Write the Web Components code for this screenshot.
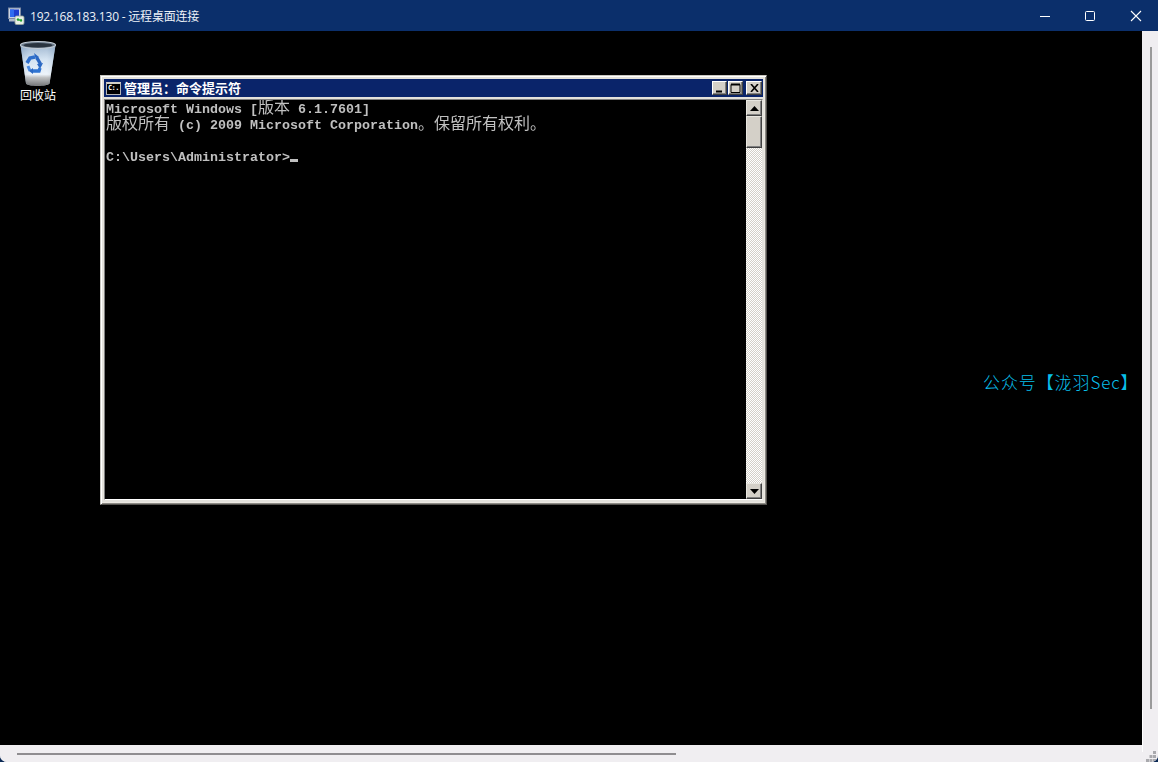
<!DOCTYPE html>
<html lang="zh"><head><meta charset="utf-8"><title>远程桌面连接</title>
<style>
html,body{margin:0;padding:0;height:100%;background:#0c2a55;overflow:hidden}
</style></head>
<body>
<rdp-app>
  <rdp-titlebar slot="top">192.168.183.130 - 远程桌面连接</rdp-titlebar>
  <desktop-icon label="回收站"></desktop-icon>
  <console-window title-text="管理员：命令提示符">
    <div>Microsoft Windows [<cjk-text>版本</cjk-text> 6.1.7601]</div>
    <div><cjk-text>版权所有</cjk-text> (c) 2009 Microsoft Corporation<cjk-text>。保留所有权利。</cjk-text></div>
    <div>&nbsp;</div>
    <div>C:\Users\Administrator&gt;<console-cursor></console-cursor></div>
  </console-window>
  <water-mark>公众号【泷羽Sec】</water-mark>
</rdp-app>
<script>
function def(name, html, extra){
  customElements.define(name, class extends HTMLElement{
    constructor(){super();this.attachShadow({mode:'open'}).innerHTML=html;}
    connectedCallback(){ if(extra) extra(this); }
  });
}
def('rdp-app',`<style>
:host{display:flex;flex-direction:column;width:1158px;height:762px;border-radius:0 0 7px 7px;overflow:hidden;background:#f0eef1;font-family:"Liberation Sans",sans-serif}
.main{flex:1;display:flex;min-height:0}
.desk{position:relative;flex:1;background:#000;overflow:hidden}
.v{width:16px;background:#f0eef1;display:flex;justify-content:center;padding:16px 0 36px;box-sizing:border-box;position:relative;flex:none}
.v i{display:block;width:2px;height:100%;background:#9a9a9a;margin-left:2px}
.v::before{content:"";position:absolute;left:0;bottom:0;height:35px;width:1px;background:#fff}
.h{height:17px;box-sizing:border-box;flex:none;background:#f0eef1;display:flex;align-items:flex-start;padding:8px 0 0 17px;position:relative}
.h i{display:block;width:659px;height:2px;background:#8f8d90}
.h::before{content:"";position:absolute;left:1142px;top:0;height:7px;width:1px;background:#fff}
.grip{position:absolute;right:0;bottom:0;width:12px;height:11px}
</style>
<slot name="top"></slot>
<div class="main"><div class="desk"><slot></slot></div><div class="v"><i></i></div></div>
<div class="h"><i></i><svg class="grip" viewBox="0 0 12 11"><g fill="#a9a9ad"><rect x="7" y="0" width="3" height="3"/><rect x="3.500" y="4" width="3" height="3"/><rect x="7" y="4" width="3" height="3"/><rect x="0" y="8" width="3" height="3"/><rect x="3.500" y="8" width="3" height="3"/><rect x="7" y="8" width="3" height="3"/></g></svg></div>`);

def('rdp-titlebar',`<style>
:host{display:flex;align-items:center;height:31px;background:#0b2f6b;color:#e9eef6;font:12px "Open Sans","Noto Sans CJK SC",sans-serif;flex:none}
.ic{width:18px;height:18px;margin:0 5px 0 7px;flex:none}
.t{flex:1;white-space:nowrap;position:relative;top:0;color:#edf1f7;letter-spacing:-.2px}
.b{height:31px;display:flex;align-items:center;justify-content:center;flex:none}
svg.g{width:12px;height:12px;display:block}
</style>
<svg class="ic" viewBox="0 0 18 18">
 <rect x="1.500" y="1" width="12" height="10.500" fill="#c9d4e6" stroke="#7d8aa3"/>
 <rect x="3" y="2.500" width="9" height="7.500" fill="#1e3fd0"/>
 <rect x="3" y="2.500" width="4" height="7.500" fill="#2f6cf0"/>
 <rect x="2" y="12" width="10" height="2.500" fill="#aeb8c9"/>
 <rect x="8" y="9" width="9" height="8.500" rx="1.500" fill="#e8efe6" stroke="#9aa69a" stroke-width=".8"/>
 <path d="M10 13h5M10 13l1.500-1.500M15 13l-1.500 1.500" stroke="#22a22f" stroke-width="1.500" fill="none"/>
</svg>
<span class="t"><slot></slot></span>
<div class="b" style="width:42px"><svg class="g" viewBox="0 0 12 12"><path d="M1 6.500h10" stroke="#fff"/></svg></div>
<div class="b" style="width:48px"><svg class="g" viewBox="0 0 12 12"><rect x="1.500" y="1.500" width="9" height="9" rx="1" fill="none" stroke="#fff"/></svg></div>
<div class="b" style="width:44px"><svg class="g" viewBox="0 0 12 12"><path d="M1 1l10 10M11 1L1 11" stroke="#fff" stroke-width="1.100"/></svg></div>`);

def('desktop-icon',`<style>
:host{position:absolute;left:8px;top:8px;width:60px;display:flex;flex-direction:column;align-items:center;color:#fff;font:12px "Noto Sans CJK SC",sans-serif}
svg{width:40px;height:50px;display:block}
span{line-height:16px;margin-top:-2px;text-shadow:1px 1px 1px #000}
</style>
<svg viewBox="0 0 40 50">
 <defs>
  <linearGradient id="a" x1="0" x2="1" y1="0" y2="0"><stop offset="0" stop-color="#6f88a6"/><stop offset=".25" stop-color="#dfeaf5"/><stop offset=".75" stop-color="#eef4fa"/><stop offset="1" stop-color="#8aa2bb"/></linearGradient>
  <linearGradient id="b" x1="0" x2="0" y1="0" y2="1"><stop offset="0" stop-color="#8ea9c6"/><stop offset=".35" stop-color="#cfe0f0"/><stop offset=".72" stop-color="#eef4fa"/><stop offset=".8" stop-color="#b4b4b4"/><stop offset="1" stop-color="#5a5a5a"/></linearGradient>
 </defs>
 <path d="M2.500 6L8 44.500C9 47.500 30 47.500 31.500 44.500L37.500 6Z" fill="url(#a)"/>
 <path d="M2.500 6L8 44.500C9 47.500 30 47.500 31.500 44.500L37.500 6Z" fill="url(#b)" opacity=".8"/>
 <ellipse cx="20" cy="6" rx="17.500" ry="3.500" fill="#6d7c8c" stroke="#c3ccd5" stroke-width="1.100"/>
 <ellipse cx="20" cy="6.300" rx="14.500" ry="2.200" fill="#2a343f"/>
 <g fill="none">
  <path d="M9 24l3-5 5-1" stroke="#2f6fcb" stroke-width="3.600"/>
  <path d="M19 19l3.500 6" stroke="#2b66c0" stroke-width="3.400"/>
  <path d="M22 29l-1 3h-6" stroke="#2f74d2" stroke-width="3.400"/>
  <path d="M10 27l2 5" stroke="#4a8ae0" stroke-width="3"/>
 </g>
 <path d="M16 14l2 7 3-3zM25 24l-6 1 3 5zM15 29l-4 3 4 3z" fill="#2a68c4"/>
</svg>
<span></span>`, el=>{el.shadowRoot.querySelector('span').textContent=el.getAttribute('label');});

def('console-window',`<style>
:host{position:absolute;left:100px;top:44px;width:667px;height:430px;box-sizing:border-box;background:#e4e2dc;border:1px solid;border-color:#c8c6c0 #55534f #55534f #c8c6c0;box-shadow:inset 1px 1px #fff,inset -1px -1px #8c8a85,inset -2px -2px #ece9e2;padding:3px 3px 4px 3px;display:flex;flex-direction:column}
.cap{height:18px;flex:none;background:#0a246a;display:flex;align-items:center;padding:0 1px 0 2px;color:#fff;font:bold 13px "Noto Sans CJK SC",sans-serif}
.icon{width:15px;height:13px;background:#000;border:1px solid #b5b5b5;box-sizing:border-box;border-top:2px solid #d4d0c8;color:#fff;font:bold 7px/9px "DejaVu Sans Mono",monospace;letter-spacing:-.6px;overflow:hidden;text-align:left;padding-left:1px;margin-right:3px;flex:none;white-space:nowrap}
.tt{flex:1;white-space:pre;line-height:18px}
.btn{width:15px;height:14px;margin-left:1px;box-sizing:border-box;background:#d4d0c8;border:1px solid;border-color:#fff #404040 #404040 #fff;box-shadow:inset -1px -1px #808080;display:flex;align-items:center;justify-content:center;flex:none}
.btn.close{width:16px}
.btn svg{display:block}
.gap{width:2px;flex:none}
.body{flex:1;min-height:0;display:flex;margin-top:2px;border:1px solid;border-color:#808080 #e4e2dc #fff #808080}
.term{flex:1;background:#000;overflow:hidden}
.lines{color:#c0c0c0;font:bold 13.333px/16px "Liberation Mono",monospace;padding:2px 0 0 1px;white-space:nowrap;will-change:transform}
::slotted(div){height:16px}
.sb{width:16px;flex:none;display:flex;flex-direction:column;background-color:#fff;background-image:conic-gradient(#d4d0c8 25%,#fff 0 50%,#d4d0c8 0 75%,#fff 0);background-size:2px 2px}
.a{height:16px;flex:none;box-sizing:border-box;background:#d4d0c8;border:1px solid;border-color:#e8e6e0 #404040 #404040 #e8e6e0;box-shadow:inset -1px -1px #808080;display:flex;align-items:center;justify-content:center}
.th{height:32px;flex:none;box-sizing:border-box;background:#d4d0c8;border:1px solid;border-color:#e8e6e0 #404040 #404040 #e8e6e0;box-shadow:inset -1px -1px #808080}
.sp{flex:1}
</style>
<div class="cap"><span class="icon">C:\.</span><span class="tt"></span>
 <span class="btn"><svg width="9" height="9" viewBox="0 0 9 9"><rect x="1" y="6.500" width="6" height="2" fill="#000"/></svg></span>
 <span class="btn"><svg width="11" height="10" viewBox="0 0 11 10"><path d="M1 1.500h9v8h-9z" fill="none" stroke="#000"/><rect x="1" y="0.500" width="9" height="2" fill="#000"/></svg></span>
 <span class="gap"></span>
 <span class="btn close"><svg width="9" height="8" viewBox="0 0 9 8"><path d="M1 0l7 8M8 0L1 8" stroke="#000" stroke-width="1.600"/></svg></span>
</div>
<div class="body"><div class="term"><div class="lines"><slot></slot></div></div>
 <div class="sb">
  <div class="a"><svg width="9" height="5" viewBox="0 0 9 5"><path d="M4.500 0L9 5H0z" fill="#000"/></svg></div>
  <div class="th"></div><div class="sp"></div>
  <div class="a"><svg width="9" height="5" viewBox="0 0 9 5"><path d="M0 0h9L4.500 5z" fill="#000"/></svg></div>
 </div>
</div>`, el=>{el.shadowRoot.querySelector('.tt').textContent=el.getAttribute('title-text');});

def('cjk-text',`<style>:host{display:inline;font:400 16px/0 "Noto Sans CJK SC",sans-serif;color:#c0c0c0}</style><slot></slot>`);
def('console-cursor',`<style>:host{display:inline-block;width:8px;height:3px;background:#c0c0c0;vertical-align:-1px}</style>`);
def('water-mark',`<style>:host{position:absolute;left:983px;top:339px;color:#08bfea;font:300 17px/24px "Noto Sans CJK SC",sans-serif;letter-spacing:.9px;white-space:nowrap}</style><slot></slot>`);
</script>
</body></html>
